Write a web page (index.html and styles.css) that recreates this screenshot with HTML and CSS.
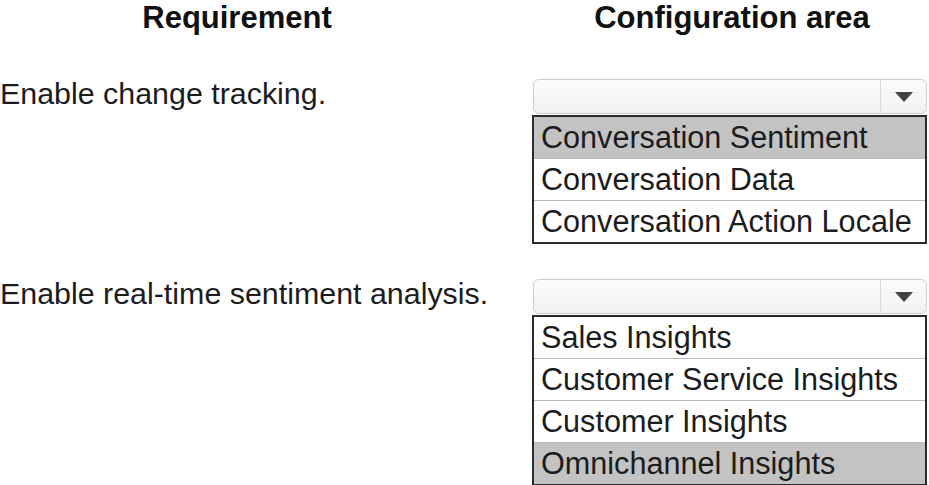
FILE: index.html
```html
<!DOCTYPE html>
<html>
<head>
<meta charset="utf-8">
<link rel="stylesheet" href="styles.css">
</head>
<body>
<div class="table">
  <div class="head head-left">Requirement</div>
  <div class="head head-right">Configuration area</div>

  <div class="label">Enable change tracking.</div>
  <div class="control">
    <div class="select">
      <div class="select-value"></div>
      <div class="select-btn"><svg width="18" height="10" viewBox="0 0 18 10"><path d="M0 0 H18 L9 10 Z" fill="#444"/></svg></div>
    </div>
    <ul class="options">
      <li class="opt selected">Conversation Sentiment</li>
      <li class="opt">Conversation Data</li>
      <li class="opt">Conversation Action Locale</li>
    </ul>
  </div>

  <div class="label row2">Enable real-time sentiment analysis.</div>
  <div class="control row2">
    <div class="select">
      <div class="select-value"></div>
      <div class="select-btn"><svg width="18" height="10" viewBox="0 0 18 10"><path d="M0 0 H18 L9 10 Z" fill="#444"/></svg></div>
    </div>
    <ul class="options">
      <li class="opt">Sales Insights</li>
      <li class="opt">Customer Service Insights</li>
      <li class="opt">Customer Insights</li>
      <li class="opt selected">Omnichannel Insights</li>
    </ul>
  </div>
</div>
</body>
</html>
```
FILE: styles.css
```css
html, body {
  margin: 0;
  padding: 0;
  background: #ffffff;
}
body {
  font-family: "Liberation Sans", Arial, sans-serif;
  color: #1a1a1a;
  width: 929px;
  height: 485px;
  overflow: hidden;
}
.table {
  display: grid;
  grid-template-columns: 532px 395px;
  align-items: start;
}
.head {
  font-weight: bold;
  font-size: 31px;
  line-height: 36px;
  color: #111;
  text-align: center;
  margin-bottom: 43px;
}
.head-left {
  padding-right: 58px;
}
.head-right {
  padding-left: 5px;
}
.label {
  font-size: 30.4px;
  line-height: 30px;
  margin-top: -1px;
  color: #1c1c1c;
}
.row2 {
  margin-top: 35px;
}
.label.row2 {
  margin-top: 34px;
}
.control {
  display: flex;
  flex-direction: column;
}
.select {
  display: flex;
  height: 35px;
  box-sizing: border-box;
  border: 1px solid #cdcdcd;
  border-radius: 6px;
  background: linear-gradient(#fbfbfb, #f2f2f2);
  margin-left: 1px;
}
.select-value {
  flex: 1;
  border-right: 1px solid #dadada;
}
.select-btn {
  width: 45px;
  display: flex;
  align-items: center;
  justify-content: center;
}
.options {
  list-style: none;
  margin: 1px 0 0 0;
  padding: 0;
  border: 2px solid #2a2a2a;
}
.opt {
  height: 41px;
  font-size: 30.6px;
  line-height: 41px;
  padding-left: 7px;
  color: #1c1c1c;
  white-space: nowrap;
  border-top: 1px solid #b9b9b9;
}
.opt:first-child {
  border-top: none;
}
.opt.selected {
  background: #c3c3c3;
}
```
